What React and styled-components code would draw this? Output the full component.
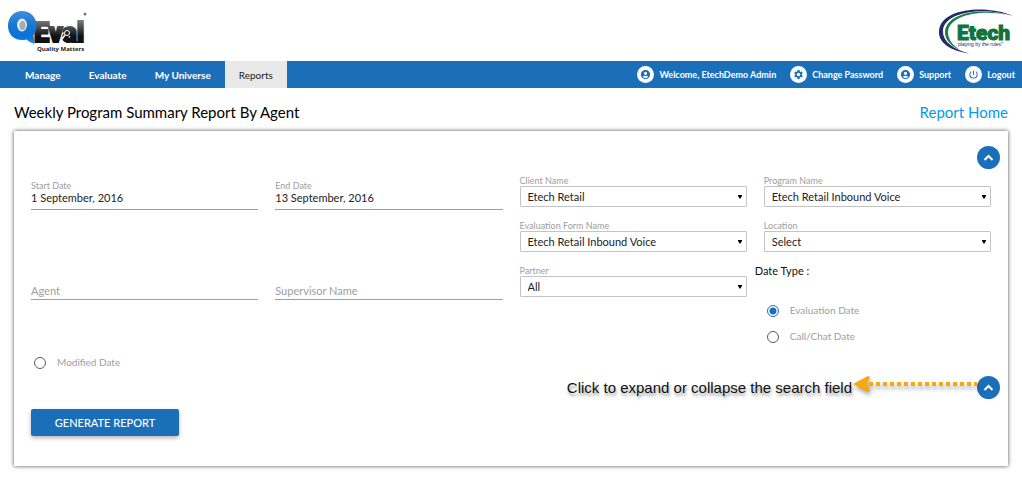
import React, { useState } from "react";
import styled, { createGlobalStyle } from "styled-components";
import {
  MdAccountCircle,
  MdPowerSettingsNew,
  MdSettings,
} from "react-icons/md";

const GlobalStyle = createGlobalStyle`
  * {
    box-sizing: border-box;
  }
  body {
    margin: 0;
    background: #fff;
    color: #111;
    font-family: Lato, "Liberation Sans", sans-serif;
    font-size: 11px;
  }
  button, input, select {
    font-family: inherit;
  }
`;

const Header = styled.header`
  display: flex;
  justify-content: space-between;
  align-items: center;
  height: 61px;
  padding: 0 7px;

  svg {
    display: block;
  }
`;

const Navbar = styled.nav`
  display: flex;
  justify-content: space-between;
  height: 27px;
  padding: 0 7px 0 11px;
  background: #1b6fb9;
`;

const NavGroup = styled.div`
  display: flex;
  gap: ${({ $gap }) => $gap || 0}px;
`;

const NavLink = styled.a`
  display: flex;
  align-items: center;
  padding: 0 14px;
  background: ${({ $active }) => ($active ? "#e9e9e9" : "transparent")};
  color: ${({ $active }) => ($active ? "#222" : "#fff")};
  font-size: 10px;
  font-weight: ${({ $active }) => ($active ? 400 : 700)};
  text-decoration: none;
`;

const UserLink = styled(NavLink)`
  gap: 5px;
  padding: 0;
  font-size: 9px;
`;

const IconCircle = styled.span`
  display: flex;
  align-items: center;
  justify-content: center;
  width: 17px;
  height: 17px;
  border-radius: 50%;
  background: #fff;
  color: #1b6fb9;
`;

const TitleBar = styled.div`
  display: flex;
  justify-content: space-between;
  align-items: center;
  height: 43px;
  padding: 4px 14px 0;
`;

const Title = styled.h1`
  margin: 0;
  color: #000;
  font-size: 15px;
  font-weight: 400;
`;

const HomeLink = styled.a`
  color: #039be5;
  font-size: 15px;
  text-decoration: none;
`;

const Panel = styled.form`
  margin: 0 14px 13px;
  padding: 15px 0 30px;
  background: #fff;
  box-shadow: 0 0 4px rgba(0, 0, 0, 0.7);
`;

const ToggleRow = styled.div`
  display: flex;
  justify-content: flex-end;
  align-items: center;
  height: 23px;
  padding-right: 8px;
`;

const CircleButton = styled.button`
  display: flex;
  align-items: center;
  justify-content: center;
  width: 23px;
  height: 23px;
  padding: 0;
  border: 0;
  border-radius: 50%;
  background: #1b6fb9;
  color: #fff;
  cursor: pointer;
`;

const Hint = styled.p`
  margin: 0;
  color: #111;
  font-family: "Liberation Sans", Arial, sans-serif;
  font-size: 15px;
  text-shadow: 1px 3px 3px rgba(0, 0, 0, 0.4);
`;

const HintArrow = styled.svg`
  display: block;
  overflow: visible;
  filter: drop-shadow(1px 3px 2px rgba(0, 0, 0, 0.35));
`;

const SearchFields = styled.div`
  padding: 6px 17px 0;
`;

const FieldGrid = styled.div`
  display: grid;
  grid-template-columns: repeat(4, 1fr);
  grid-template-rows: 32px 32px auto;
  gap: 13px 17px;
  align-items: start;
`;

const Field = styled.div`
  display: flex;
  flex-direction: column;
  grid-column: ${({ $column }) => $column};
  grid-row: ${({ $row }) => $row};
  padding-top: ${({ $line }) => ($line ? 5 : 0)}px;
`;

const FieldLabel = styled.label`
  height: 11px;
  color: #9e9e9e;
  font-size: 9px;
  line-height: 11px;
`;

const HiddenLabel = styled(FieldLabel)`
  visibility: hidden;
`;

const LineInput = styled.input`
  width: 100%;
  height: 19px;
  padding: 0 0 5px;
  border: 0;
  border-bottom: 1px solid #9e9e9e;
  outline: 0;
  background: transparent;
  color: #222;
  font-size: 11px;

  &:placeholder-shown {
    padding-bottom: 0;
  }
  &::placeholder {
    color: #9e9e9e;
    opacity: 1;
  }
`;

const SelectBox = styled.div`
  display: grid;
  align-items: center;

  select,
  svg {
    grid-area: 1 / 1;
  }
  svg {
    justify-self: end;
    margin-right: 5px;
    pointer-events: none;
  }
`;

const Select = styled.select`
  appearance: none;
  width: 100%;
  height: 21px;
  padding: 0 16px 0 7px;
  border: 1px solid #c4c4c4;
  border-radius: 1px;
  background: #fff;
  color: #222;
  font-size: 11px;
`;

const DateType = styled.fieldset`
  grid-column: 4;
  grid-row: 3;
  min-width: 0;
  margin: 0 0 0 -9px;
  padding: 0;
  border: 0;

  legend {
    margin-bottom: 21px;
    padding: 0;
    line-height: 12px;
  }
`;

const RadioList = styled.div`
  padding-left: 9px;
`;

const RadioLabel = styled.label`
  display: flex;
  align-items: center;
  gap: 11px;
  width: fit-content;
  height: 26px;
  padding-left: 3px;
  color: #9e9e9e;
  font-size: 10px;

  span {
    padding-bottom: 3px;
  }
`;

const RadioInput = styled.input`
  appearance: none;
  width: 12px;
  height: 12px;
  margin: 0;
  border: 1px solid #5a5a5a;
  border-radius: 50%;
  background: #fff;

  &:checked {
    border-color: #1b6fb9;
    background: radial-gradient(circle, #1b6fb9 3px, #fff 4px);
  }
`;

const SubmitButton = styled.button`
  display: block;
  width: 148px;
  height: 27px;
  margin: 10px 17px 0;
  padding: 0;
  border: 0;
  border-radius: 2px;
  background: #1b6fb9;
  box-shadow: 0 2px 4px rgba(0, 0, 0, 0.3);
  color: #fff;
  font-size: 11px;
  font-weight: 500;
  text-transform: uppercase;
  cursor: pointer;
`;

const QEvalLogo = () => (
  <svg width="82" height="46" viewBox="0 0 82 46" role="img" aria-label="QEval">
    <defs>
      <linearGradient id="bubble" x1="0" y1="0" x2="0" y2="1">
        <stop offset="0" stopColor="#3f8fd8" />
        <stop offset="0.45" stopColor="#1577d0" />
        <stop offset="0.8" stopColor="#0872dd" />
        <stop offset="1" stopColor="#1e9cf5" />
      </linearGradient>
      <linearGradient id="word" gradientUnits="userSpaceOnUse" x1="0" y1="10" x2="0" y2="36">
        <stop offset="0" stopColor="#8a8a8a" />
        <stop offset="0.7" stopColor="#111" />
      </linearGradient>
    </defs>
    <text
      x="27"
      y="34"
      fill="url(#word)"
      stroke="url(#word)"
      strokeWidth="2"
      fontFamily="Roboto, sans-serif"
      fontSize="27"
      fontWeight="900"
    >
      Eval
    </text>
    <path
      d="M15 3C23 3 29.500 9 29.500 17.500c0 4-1 7-3 9.500 0 3 1 5 1 9-4-1-6-3-8-4.500C8 34 1 27 1 18 1 9 7 3 15 3Z"
      fill="url(#bubble)"
    />
    <ellipse cx="15" cy="17" rx="5" ry="6.500" fill="#e4e8ec" />
    <ellipse cx="15.500" cy="17.500" rx="3" ry="4.500" fill="#a7adb3" />
    <circle cx="60" cy="25" r="2.500" fill="#222" stroke="#fff" />
    <path d="m58 27-3 4" stroke="#fff" strokeWidth="1.500" />
    <circle cx="78" cy="6" r="1.500" fill="#777" />
    <text
      x="30"
      y="43"
      fill="#222"
      fontFamily="Open Sans, sans-serif"
      fontSize="6"
      fontWeight="700"
    >
      Quality Matters
    </text>
  </svg>
);

const EtechLogo = () => (
  <svg width="78" height="48" viewBox="0 0 78 48" role="img" aria-label="Etech">
    <path
      d="M76 9C52-2 4 0 2 24c-1 12 12 20 30 22.500C16 42 5 34 6 23 8 5 46-1 76 9Z"
      fill="#262a66"
    />
    <path
      d="M70 8C44 0 9 6 8 25c0 8 6 14 15 18C15 38 11 32 11 25 12 9 42 2 70 8Z"
      fill="#158048"
    />
    <text
      x="20"
      y="33"
      fill="#117240"
      stroke="#117240"
      fontFamily="Roboto, sans-serif"
      fontSize="21"
      fontWeight="900"
    >
      Etech
    </text>
    <text
      x="21"
      y="39"
      fill="#262a66"
      fontFamily="Liberation Sans, sans-serif"
      fontSize="5"
    >
      playing by the rules”
    </text>
  </svg>
);

const mainLinks = ["Manage", "Evaluate", "My Universe", "Reports"];

const userLinks = [
  { text: "Welcome, EtechDemo Admin", Icon: MdAccountCircle },
  { text: "Change Password", Icon: MdSettings },
  { text: "Support", Icon: MdAccountCircle },
  { text: "Logout", Icon: MdPowerSettingsNew },
];

const selectFields = [
  { id: "client", label: "Client Name", value: "Etech Retail", column: 3, row: 1 },
  { id: "program", label: "Program Name", value: "Etech Retail Inbound Voice", column: 4, row: 1 },
  { id: "evalForm", label: "Evaluation Form Name", value: "Etech Retail Inbound Voice", column: 3, row: 2 },
  { id: "location", label: "Location", value: "Select", column: 4, row: 2 },
  { id: "partner", label: "Partner", value: "All", column: 3, row: 3 },
];

const ToggleButton = ({ onClick }) => (
  <CircleButton type="button" aria-label="Toggle search" onClick={onClick}>
    <svg width="11" height="7" viewBox="0 0 11 7" aria-hidden="true">
      <path d="m1.500 6 4-4 4 4" fill="none" stroke="currentColor" strokeWidth="2" />
    </svg>
  </CircleButton>
);

const SelectField = ({ id, label, value, column, row }) => (
  <Field $column={column} $row={row}>
    <FieldLabel htmlFor={id}>{label}</FieldLabel>
    <SelectBox>
      <Select id={id} defaultValue={value}>
        <option>{value}</option>
      </Select>
      <svg width="4" height="4" viewBox="0 0 4 4" aria-hidden="true">
        <path d="M0 0h4v1L2 4 0 1Z" fill="#000" />
      </svg>
    </SelectBox>
  </Field>
);

const DateField = ({ id, label, value, column }) => (
  <Field $column={column} $row={1} $line>
    <FieldLabel htmlFor={id}>{label}</FieldLabel>
    <LineInput id={id} type="text" defaultValue={value} />
  </Field>
);

const SearchField = ({ id, label, column }) => (
  <Field $column={column} $row={3} $line>
    <HiddenLabel htmlFor={id}>{label}</HiddenLabel>
    <LineInput id={id} type="text" placeholder={label} aria-label={label} />
  </Field>
);

const App = () => {
  const [expanded, setExpanded] = useState(true);
  const [dateType, setDateType] = useState("Evaluation Date");

  const toggle = () => setExpanded(!expanded);

  const renderRadio = (text) => (
    <RadioLabel key={text}>
      <RadioInput
        type="radio"
        name="dateType"
        checked={dateType === text}
        onChange={() => setDateType(text)}
      />
      <span>{text}</span>
    </RadioLabel>
  );

  return (
    <>
      <GlobalStyle />
      <Header>
        <QEvalLogo />
        <EtechLogo />
      </Header>
      <Navbar>
        <NavGroup>
          {mainLinks.map((text) => (
            <NavLink key={text} href="#" $active={text === "Reports"}>
              {text}
            </NavLink>
          ))}
        </NavGroup>
        <NavGroup $gap={14}>
          {userLinks.map(({ text, Icon }) => (
            <UserLink key={text} href="#">
              <IconCircle>
                <Icon size={11} />
              </IconCircle>
              {text}
            </UserLink>
          ))}
        </NavGroup>
      </Navbar>
      <TitleBar>
        <Title>Weekly Program Summary Report By Agent</Title>
        <HomeLink href="#">Report Home</HomeLink>
      </TitleBar>
      <Panel onSubmit={(e) => e.preventDefault()}>
        <ToggleRow>
          <ToggleButton onClick={toggle} />
        </ToggleRow>
        {expanded && (
          <SearchFields>
            <FieldGrid>
              <DateField id="start" label="Start Date" value="1 September, 2016" column={1} />
              <DateField id="end" label="End Date" value="13 September, 2016" column={2} />
              {selectFields.map((field) => (
                <SelectField key={field.id} {...field} />
              ))}
              <SearchField id="agent" label="Agent" column={1} />
              <SearchField id="supervisor" label="Supervisor Name" column={2} />
              <DateType>
                <legend>Date Type :</legend>
                <RadioList>
                  {["Evaluation Date", "Call/Chat Date"].map(renderRadio)}
                </RadioList>
              </DateType>
            </FieldGrid>
            {renderRadio("Modified Date")}
          </SearchFields>
        )}
        <ToggleRow>
          <Hint>Click to expand or collapse the search field</Hint>
          <HintArrow width="125" height="16" viewBox="0 0 125 16" aria-hidden="true">
            <path d="m1 4 15-8 2 1-3 7 3 7-2 1Z" fill="#f7a80d" />
            <path d="M17 4h108" stroke="#f7a80d" strokeWidth="4" strokeDasharray="4 3" />
          </HintArrow>
          <ToggleButton onClick={toggle} />
        </ToggleRow>
        <SubmitButton type="submit">Generate Report</SubmitButton>
      </Panel>
    </>
  );
};

export default App;
